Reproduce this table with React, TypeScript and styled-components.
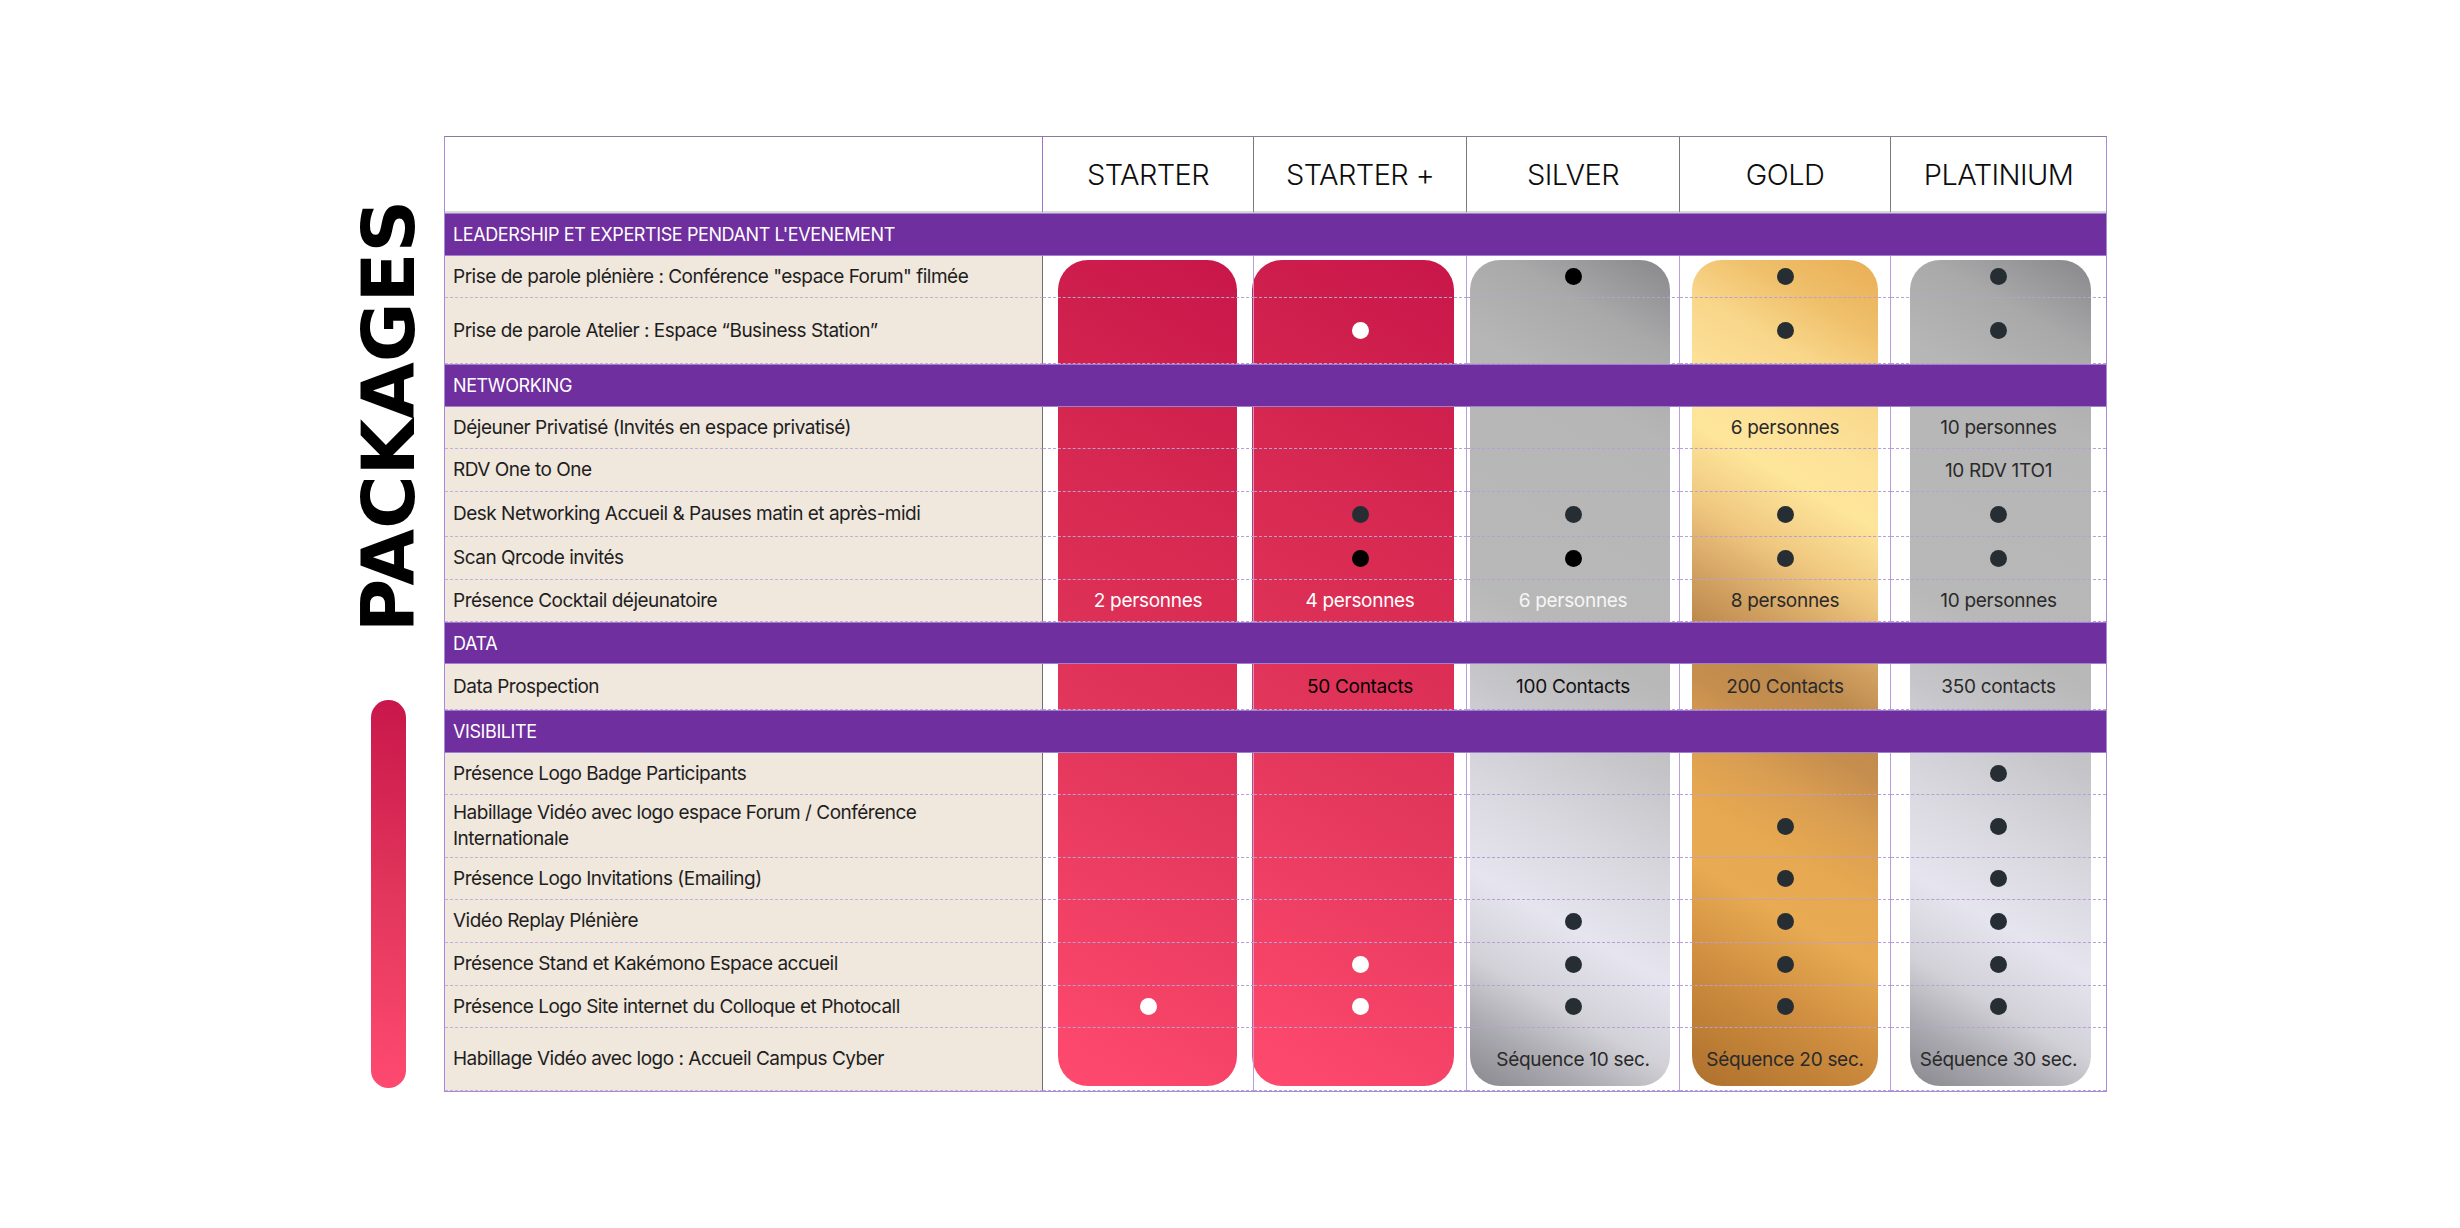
import React from "react";
import styled, { createGlobalStyle, css } from "styled-components";

type Tone = "pink" | "silver" | "gold" | "platinum";
type DotKind = "dark" | "black" | "white";
type Value = null | { dot: DotKind } | { text: string; color?: string };

interface Row {
  label: string;
  section?: boolean;
  h: number;
  values?: Value[];
}

const GlobalStyle = createGlobalStyle`
  * { box-sizing: border-box; }
  body {
    margin: 0;
    background: #ffffff;
    font-family: "Inter", "Open Sans", sans-serif;
  }
`;

const D = (dot: DotKind): Value => ({ dot });
const T = (text: string, color = "#2a2a2a"): Value => ({ text, color });
const _ = null;

const plans: { name: string; tone: Tone; ml: number; mr: number }[] = [
  { name: "STARTER", tone: "pink", ml: 15, mr: 17 },
  { name: "STARTER +", tone: "pink", ml: -2, mr: 13 },
  { name: "SILVER", tone: "silver", ml: 3, mr: 10 },
  { name: "GOLD", tone: "gold", ml: 12, mr: 13 },
  { name: "PLATINIUM", tone: "platinum", ml: 19, mr: 15 },
];

const rows: Row[] = [
  { label: "LEADERSHIP ET EXPERTISE PENDANT L'EVENEMENT", section: true, h: 43 },
  {
    label: 'Prise de parole plénière : Conférence "espace Forum" filmée',
    h: 42,
    values: [_, _, D("black"), D("dark"), D("dark")],
  },
  {
    label: "Prise de parole Atelier : Espace “Business Station”",
    h: 66,
    values: [_, D("white"), _, D("dark"), D("dark")],
  },
  { label: "NETWORKING", section: true, h: 43 },
  {
    label: "Déjeuner Privatisé (Invités en espace privatisé)",
    h: 42,
    values: [_, _, _, T("6 personnes"), T("10 personnes")],
  },
  { label: "RDV One to One", h: 43, values: [_, _, _, _, T("10 RDV 1TO1")] },
  {
    label: "Desk Networking Accueil & Pauses matin et après-midi",
    h: 45,
    values: [_, D("dark"), D("dark"), D("dark"), D("dark")],
  },
  {
    label: "Scan Qrcode invités",
    h: 43,
    values: [_, D("black"), D("black"), D("dark"), D("dark")],
  },
  {
    label: "Présence Cocktail déjeunatoire",
    h: 42,
    values: [
      T("2 personnes", "#ffffff"),
      T("4 personnes", "#ffffff"),
      T("6 personnes", "#f6f6f6"),
      T("8 personnes"),
      T("10 personnes"),
    ],
  },
  { label: "DATA", section: true, h: 42 },
  {
    label: "Data Prospection",
    h: 46,
    values: [
      _,
      T("50 Contacts", "#000000"),
      T("100 Contacts", "#111111"),
      T("200 Contacts"),
      T("350 contacts"),
    ],
  },
  { label: "VISIBILITE", section: true, h: 43 },
  { label: "Présence Logo Badge Participants", h: 42, values: [_, _, _, _, D("dark")] },
  {
    label: "Habillage Vidéo avec logo espace Forum / Conférence Internationale",
    h: 63,
    values: [_, _, _, D("dark"), D("dark")],
  },
  {
    label: "Présence Logo Invitations (Emailing)",
    h: 42,
    values: [_, _, _, D("dark"), D("dark")],
  },
  {
    label: "Vidéo Replay Plénière",
    h: 43,
    values: [_, _, D("dark"), D("dark"), D("dark")],
  },
  {
    label: "Présence Stand et Kakémono Espace accueil",
    h: 43,
    values: [_, D("white"), D("dark"), D("dark"), D("dark")],
  },
  {
    label: "Présence Logo Site internet du Colloque et Photocall",
    h: 42,
    values: [D("white"), D("white"), D("dark"), D("dark"), D("dark")],
  },
  {
    label: "Habillage Vidéo avec logo : Accueil Campus Cyber",
    h: 63,
    values: [_, _, T("Séquence 10 sec."), T("Séquence 20 sec."), T("Séquence 30 sec.")],
  },
];

const metal = `linear-gradient(210deg, #88888c 0%, #a9a9aa 10%, #b6b6b6 20%, #b8b8b8 46%, #c6c6ca 56%, #d9d8df 67%, #e6e4ee 77%, #d2d1d8 86%, #a9a9af 93%, #88888e 100%)`;

const toneBg: Record<Tone, string> = {
  pink: "linear-gradient(210deg, #c8164a 0%, #d62850 30%, #e4375c 62%, #ff4a6e 100%)",
  silver: metal,
  platinum: metal,
  gold: `linear-gradient(210deg, #e9ae55 0%, #efbf6a 8%, #f8d68a 15%, #fde39a 24%, #fde59a 29%, #f0c880 37%, #d4a464 44%, #bd8a4e 50%, #c68e4e 56%, #d99e52 62%, #e6a850 69%, #e8aa52 76%, #cf8e40 86%, #ad702c 100%)`,
};

const dotColor: Record<DotKind, string> = {
  dark: "#262e33",
  black: "#000000",
  white: "#ffffff",
};

const Page = styled.main`
  display: flex;
  align-items: flex-start;
  padding: 136px 0 0 360px;
  min-height: 1228px;
`;

const Side = styled.aside`
  width: 56px;
  margin-right: 28px;
  padding-top: 64px;
  display: flex;
  flex-direction: column;
  align-items: center;
`;

const Title = styled.h1`
  margin: 0;
  writing-mode: vertical-rl;
  transform: rotate(180deg);
  font-family: "DejaVu Sans", "Liberation Sans", sans-serif;
  font-weight: 900;
  font-size: 73px;
  line-height: 1;
  letter-spacing: 0;
  color: #000000;
`;

const Bar = styled.div`
  width: 35px;
  height: 388px;
  margin-top: 68px;
  border-radius: 18px;
  background: linear-gradient(190deg, #c8164a 0%, #e2365c 50%, #ff4a70 100%);
`;

const Table = styled.div<{ $rows: string }>`
  display: grid;
  grid-template-columns: 598px 211px 213px 213px 211px 215px;
  grid-template-rows: ${(p) => p.$rows};
  border: 1px solid #a98bd4;
  border-top-color: #8a7aa0;
  background: #ffffff;
`;

const Placed = css<{ $row: number; $col: number }>`
  grid-row: ${(p) => p.$row};
  grid-column: ${(p) => p.$col};
`;

const HeadCell = styled.div<{ $row: number; $col: number }>`
  ${Placed};
  z-index: 1;
  display: flex;
  align-items: center;
  justify-content: center;
  border-right: ${(p) =>
    p.$col === 1 ? "1px solid #a070d0" : p.$col === 6 ? "none" : "1px solid #7a7a7a"};
  border-bottom: 2px solid #d8d8d8;
  font-size: 29px;
  font-weight: 300;
  letter-spacing: -0.6px;
  color: #0d0d0d;
`;

const SectionBar = styled.div<{ $row: number }>`
  grid-row: ${(p) => p.$row};
  grid-column: 1 / -1;
  z-index: 2;
  display: flex;
  align-items: center;
  padding-left: 8px;
  background: #6f2f9e;
  border-top: 1px solid #9f7fd0;
  border-bottom: 1px solid #9f7fd0;
  color: #ffffff;
  font-size: 18px;
  letter-spacing: -0.4px;
  text-transform: uppercase;
`;

const Label = styled.div<{ $row: number; $col: number }>`
  ${Placed};
  z-index: 1;
  display: flex;
  align-items: center;
  padding: 0 50px 0 8px;
  background: #f0e7dd;
  border-right: 1px solid #6e6e6e;
  border-bottom: 1px dashed #c8aede;
  font-size: 19px;
  line-height: 26px;
  letter-spacing: -0.5px;
  color: #1e1e1e;
`;

const ValueCell = styled.div<{ $row: number; $col: number }>`
  ${Placed};
  z-index: 1;
  display: flex;
  align-items: center;
  justify-content: center;
  border-right: ${(p) => (p.$col === 6 ? "none" : "1px solid #b89fdc")};
  border-bottom: 1px dashed #b89fd6;
`;

const Card = styled.div<{ $col: number; $tone: Tone; $ml: number; $mr: number }>`
  grid-row: 3 / -1;
  grid-column: ${(p) => p.$col};
  z-index: 0;
  margin: 4px ${(p) => p.$mr}px 5px ${(p) => p.$ml}px;
  border-radius: 30px;
  background: ${(p) => toneBg[p.$tone]};
`;

const Dot = styled.span<{ $kind: DotKind }>`
  width: 17px;
  height: 17px;
  border-radius: 50%;
  background: ${(p) => dotColor[p.$kind]};
`;

const ValueText = styled.span<{ $color: string }>`
  font-size: 19px;
  letter-spacing: -0.3px;
  color: ${(p) => p.$color};
`;

export default function App() {
  const template = ["76px", ...rows.map((r) => `${r.h}px`)].join(" ");

  return (
    <>
      <GlobalStyle />
      <Page>
        <Side>
          <Title>PACKAGES</Title>
          <Bar />
        </Side>
        <Table $rows={template}>
          <HeadCell $row={1} $col={1} />
          {plans.map((p, i) => (
            <HeadCell key={p.name} $row={1} $col={i + 2}>
              {p.name}
            </HeadCell>
          ))}
          {plans.map((p, i) => (
            <Card key={p.name} $col={i + 2} $tone={p.tone} $ml={p.ml} $mr={p.mr} />
          ))}
          {rows.map((r, ri) => {
            const row = ri + 2;
            if (r.section) {
              return (
                <SectionBar key={r.label} $row={row}>
                  {r.label}
                </SectionBar>
              );
            }
            return (
              <React.Fragment key={r.label}>
                <Label $row={row} $col={1}>
                  {r.label}
                </Label>
                {r.values!.map((v, ci) => (
                  <ValueCell key={ci} $row={row} $col={ci + 2}>
                    {v && "dot" in v && <Dot $kind={v.dot} />}
                    {v && "text" in v && (
                      <ValueText $color={v.color ?? "#2a2a2a"}>{v.text}</ValueText>
                    )}
                  </ValueCell>
                ))}
              </React.Fragment>
            );
          })}
        </Table>
      </Page>
    </>
  );
}
